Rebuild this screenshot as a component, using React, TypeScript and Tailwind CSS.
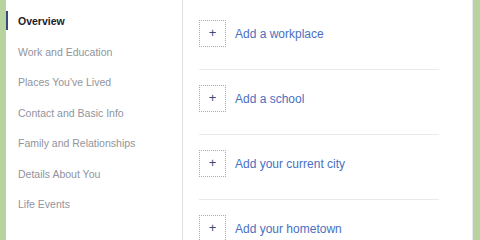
import React from 'react';

const menu = [
  'Overview',
  'Work and Education',
  "Places You've Lived",
  'Contact and Basic Info',
  'Family and Relationships',
  'Details About You',
  'Life Events',
];

const adds = ['Add a workplace', 'Add a school', 'Add your current city', 'Add your hometown'];

export default function App() {
  return (
    <div
      className="flex h-[240px] w-[480px] overflow-hidden bg-white"
      style={{ fontFamily: '"Liberation Sans", Arial, sans-serif' }}
    >
      {/* left green edge */}
      <div className="w-[6px] shrink-0 bg-[#b7d3a0]" />

      {/* About menu */}
      <nav className="w-[177px] shrink-0 border-r border-[#dddfe2] pt-[7px]">
        {menu.map((item, i) => (
          <div key={item} className="relative flex h-[30.5px] items-center pl-[12px]">
            {i === 0 && <span className="absolute left-0 top-[4px] h-[19px] w-[2px] bg-[#3b4a7a]" />}
            <span
              className={
                i === 0
                  ? 'text-[10.5px] font-bold text-[#1d2129]'
                  : 'text-[10.5px] text-[#90949c]'
              }
            >
              {item}
            </span>
          </div>
        ))}
      </nav>

      {/* content */}
      <main className="flex-1 border-r border-[#e9eaed] pl-[16px] pt-[5px]">
        <div className="w-[240px]">
          {adds.map((label) => (
            <div
              key={label}
              className="flex items-center gap-[9px] border-b border-[#e9eaed] pb-[22px] pt-[15px]"
            >
              <div className="flex h-[27px] w-[27px] shrink-0 items-center justify-center border border-dotted border-[#9aaaca]">
                <span className="-mt-[2px] text-[13px] leading-none text-[#3b4a7a]">+</span>
              </div>
              <span className="text-[12px] text-[#4a6fc1]">{label}</span>
            </div>
          ))}
        </div>
      </main>

      {/* right green edge */}
      <div className="w-[7px] shrink-0 bg-[#b7d3a0]" />
    </div>
  );
}
